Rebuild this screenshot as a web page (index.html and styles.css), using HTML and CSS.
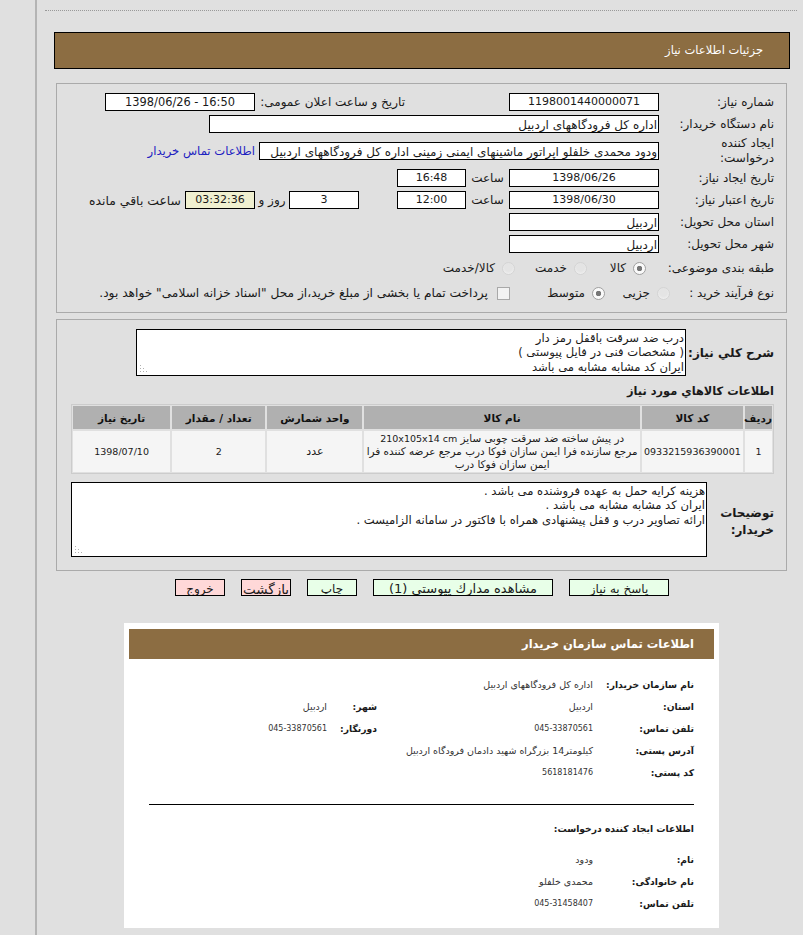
FILE: index.html
```html
<!DOCTYPE html>
<html lang="fa" dir="rtl">
<head>
<meta charset="utf-8">
<title>جزئیات اطلاعات نیاز</title>
<link rel="stylesheet" href="styles.css">
</head>
<body>
<div class="page">
  <div class="dots"></div>
  <div class="titlebar">جزئیات اطلاعات نیاز</div>

  <section class="panel form">
    <div class="row">
      <div class="lab">شماره نياز:</div>
      <div class="fld w150 c">1198001440000071</div>
      <div class="lab2">تاریخ و ساعت اعلان عمومی:</div>
      <div class="fld w150 c stamp">16:50 - 1398/06/26</div>
    </div>
    <div class="row">
      <div class="lab">نام دستگاه خریدار:</div>
      <div class="fld w450">اداره کل فرودگاههای اردبیل</div>
    </div>
    <div class="row tall">
      <div class="lab">ایجاد کننده<br>درخواست:</div>
      <div class="fld w400">ودود محمدی خلفلو اپراتور ماشینهای ایمنی زمینی اداره کل فرودگاههای اردبیل</div>
      <a class="link" href="#">اطلاعات تماس خریدار</a>
    </div>
    <div class="row">
      <div class="lab">تاریخ ایجاد نیاز:</div>
      <div class="fld w150 c">1398/06/26</div>
      <div class="hour">ساعت</div>
      <div class="fld w69 c">16:48</div>
    </div>
    <div class="row">
      <div class="lab">تاریخ اعتبار نیاز:</div>
      <div class="fld w150 c">1398/06/30</div>
      <div class="hour">ساعت</div>
      <div class="fld w69 c">12:00</div>
      <div class="fld w70 c days">3</div>
      <div class="and">روز و</div>
      <div class="fld w70 c clock">03:32:36</div>
      <div class="left">ساعت باقي مانده</div>
    </div>
    <div class="row">
      <div class="lab">استان محل تحویل:</div>
      <div class="fld w150">اردبیل</div>
    </div>
    <div class="row">
      <div class="lab">شهر محل تحویل:</div>
      <div class="fld w150">اردبیل</div>
    </div>
    <div class="row opts first">
      <div class="lab">طبقه بندی موضوعی:</div>
      <div class="opt o1"><span class="radio on"></span>كالا</div>
      <div class="opt o2"><span class="radio"></span>خدمت</div>
      <div class="opt o3"><span class="radio"></span>كالا/خدمت</div>
    </div>
    <div class="row opts second">
      <div class="lab">نوع فرآیند خرید :</div>
      <div class="opt o4"><span class="radio"></span>جزیی</div>
      <div class="opt o5"><span class="radio on"></span>متوسط</div>
      <div class="opt o6"><span class="check"></span>پرداخت تمام یا بخشی از مبلغ خرید،از محل "اسناد خزانه اسلامی" خواهد بود.</div>
    </div>
  </section>

  <section class="panel detail">
    <div class="desc">
      <div class="blab">شرح كلي نياز:</div>
      <div class="wrap">
        <textarea class="area a1" readonly>درب ضد سرقت باقفل رمز دار
( مشخصات فنی در فایل پیوستی )
ایران کد مشابه مشابه می باشد</textarea>
        <span class="grip"></span>
      </div>
    </div>
    <h2 class="blab goods">اطلاعات كالاهاي مورد نياز</h2>
    <table class="items">
      <thead>
        <tr>
          <th class="col1">رديف</th>
          <th class="col2">کد کالا</th>
          <th class="col3">نام کالا</th>
          <th class="col4">واحد شمارش</th>
          <th class="col5">تعداد / مقدار</th>
          <th class="col6">تاریخ نیاز</th>
        </tr>
      </thead>
      <tbody>
        <tr>
          <td>1</td>
          <td>0933215936390001</td>
          <td class="name">در پیش ساخته ضد سرقت چوبی سایز <span class="latin">210x105x14 cm</span><br>مرجع سازنده فرا ایمن سازان فوکا درب مرجع عرضه کننده فرا<br>ایمن سازان فوکا درب</td>
          <td class="unit">عدد</td>
          <td>2</td>
          <td>1398/07/10</td>
        </tr>
      </tbody>
    </table>
    <div class="notes">
      <div class="blab nlab">توضیحات خریدار:</div>
      <div class="wrap">
        <textarea class="area a2" readonly>هزینه کرایه حمل به عهده فروشنده می باشد .
ایران کد مشابه مشابه می باشد .
ارائه تصاویر درب و قفل پیشنهادی همراه با فاکتور در سامانه الزامیست .</textarea>
        <span class="grip"></span>
      </div>
    </div>
  </section>

  <div class="actions">
    <button class="btn go b100">پاسخ به نیاز</button>
    <button class="btn go b180 big">مشاهده مدارك پيوستي (1)</button>
    <button class="btn go b50">چاپ</button>
    <button class="btn stop b50 big2">بازگشت</button>
    <button class="btn stop b50">خروج</button>
  </div>

  <section class="card">
    <h2 class="cardtitle">اطلاعات تماس سازمان خریدار</h2>
    <div class="crow first-c"><b>نام سازمان خریدار:</b><span>اداره کل فرودگاههای اردبیل</span></div>
    <div class="crow"><b>استان:</b><span class="short">اردبیل</span><b class="b2">شهر:</b><span>اردبیل</span></div>
    <div class="crow"><b>تلفن تماس:</b><span class="short num">045-33870561</span><b class="b2">دورنگار:</b><span class="num">045-33870561</span></div>
    <div class="crow"><b>آدرس پستی:</b><span>کیلومتر14 بزرگراه شهید دادمان فرودگاه اردبیل</span></div>
    <div class="crow"><b>کد پستی:</b><span class="num">5618181476</span></div>
    <hr class="rule">
    <h3 class="sub">اطلاعات ایجاد کننده درخواست:</h3>
    <div class="crow"><b>نام:</b><span>ودود</span></div>
    <div class="crow"><b>نام خانوادگی:</b><span>محمدی خلفلو</span></div>
    <div class="crow"><b>تلفن تماس:</b><span class="num">045-31458407</span></div>
  </section>
</div>
</body>
</html>
```
FILE: styles.css
```css
* { box-sizing: border-box; }
html, body { margin: 0; height: 935px; overflow: hidden; }
body {
  background: #e0e0e0;
  color: #1a1a1a;
  font-family: "DejaVu Sans", sans-serif;
  font-size: 12px;
}
.page {
  width: 803px;
  height: 935px;
  padding: 10px 6px 0 0;
  position: relative;
}
.page::before {
  content: "";
  position: absolute;
  left: 35px;
  top: 0;
  bottom: 0;
  width: 2px;
  background: #b4b4b4;
}
.dots { height: 1px; margin-left: 45px; border-top: 1px dotted #999; }
.titlebar {
  height: 37px;
  margin: 21px 7px 0 0;
  width: 736px;
  background: #8c6d42;
  border: 1px solid #000;
  color: #fff;
  line-height: 35px;
  padding-right: 26px;
  font-size: 11.5px;
}
.panel {
  width: 731px;
  margin-right: 10px;
  border: 1px solid #aaa;
  padding-right: 12px;
}
.form { height: 230px; margin-top: 14px; padding-top: 9px; }
.row { display: flex; height: 18px; margin-bottom: 4px; align-items: center; }
.row.tall { height: 28px; margin-bottom: 4px; }
.lab { width: 115px; flex: none; line-height: 15px; }
.fld {
  height: 18px;
  flex: none;
  background: #fff;
  border: 1px solid #000;
  line-height: 18px;
  white-space: nowrap;
  overflow: hidden;
  padding-right: 1px;
}
.c { text-align: center; padding: 0; font-size: 11px; line-height: 16px; }
.stamp { font-size: 11.4px; }
.w150 { width: 150px; }
.w450 { width: 450px; }
.w400 { width: 400px; }
.w69 { width: 69px; }
.w70 { width: 70px; }
.lab2 { width: 150px; margin-right: 104px; flex: none; white-space: nowrap; }
.link { color: #2020c0; text-decoration: none; margin-right: 4px; white-space: nowrap; font-size: 11.6px; }
.hour { width: 43px; flex: none; text-align: center; }
.days { margin-right: 38px; }
.and { width: 34px; text-align: center; flex: none; white-space: nowrap; }
.clock { background: #f0f0d0; }
.left { margin-right: 4px; white-space: nowrap; font-size: 12.4px; }
.first { margin-top: 6px; margin-bottom: 7px; }
.opt { display: flex; align-items: center; white-space: nowrap; }
.o1 { margin-right: 13px; width: 59px; flex: none; }
.o2 { width: 72px; flex: none; }
.o4 { width: 65px; margin-right: -11px; flex: none; }
.o5 { width: 95px; flex: none; }
.o6 { font-size: 12.2px; }
.radio {
  width: 13px;
  height: 13px;
  border-radius: 50%;
  flex: none;
  margin-left: 7px;
  background: radial-gradient(circle at 50% 40%, #e4e4e4 0 45%, #f6f6f6 100%);
  border: 1px solid #d4d4d4;
}
.radio.on {
  background: radial-gradient(circle, #777 0 2.5px, #fafafa 3px);
  border-color: #a0a0a0;
}
.check {
  width: 13px;
  height: 13px;
  flex: none;
  margin-left: 9px;
  background: #f2f2f2;
  border: 1px solid #a8a8a8;
}
.detail { height: 252px; margin-top: 6px; padding-top: 9px; }
.desc { display: flex; align-items: center; height: 47px; }
.blab { font-size: 12px; font-weight: bold; margin: 0; }
.desc .blab { width: 88px; flex: none; }
.wrap { position: relative; flex: none; }
.grip {
  position: absolute;
  left: 4px;
  bottom: 4px;
  width: 1px;
  height: 1px;
  background: #b0b0b0;
  box-shadow: 0 -3px #b0b0b0, 0 -6px #b0b0b0, 3px 0 #b0b0b0, 3px -3px #b0b0b0, 6px 0 #b0b0b0;
}
.area {
  display: block;
  background: #fff;
  border: 1px solid #000;
  border-radius: 0;
  padding: 1px 1px 0;
  margin: 0;
  font: 11.6px/14.3px "DejaVu Sans", sans-serif;
  color: #1a1a1a;
  overflow: hidden;
  outline: none;
  resize: none;
}
.a1 { width: 550px; height: 47px; }
.a2 { width: 636px; height: 75px; }
.goods { margin-top: 7px; height: 18px; line-height: 16px; font-size: 11.4px; }
.items {
  width: 703px;
  margin-top: 3px;
  border-collapse: separate;
  border-spacing: 2px;
  table-layout: fixed;
  box-shadow: inset 0 0 0 1px #ccc;
}
.items th {
  height: 23px;
  background: #b0b0b0;
  font-size: 10.5px;
  padding: 0;
  color: #111;
}
.items td {
  height: 41px;
  background: #f5f5f5;
  text-align: center;
  padding: 0;
  font-size: 9.5px;
}
.items td.name { font-size: 10.4px; line-height: 13px; white-space: nowrap; overflow: hidden; }
.items td.unit { font-size: 11px; }
.latin { font-size: 9.5px; }
.col1 { width: 27px; }
.col2 { width: 101px; }
.col3 { width: 275px; }
.col4 { width: 95px; }
.col5 { width: 93px; }
.col6 { width: 97px; }
.notes { display: flex; align-items: center; height: 75px; margin-top: 8px; }
.nlab { width: 67px; flex: none; line-height: 17px; padding-top: 4px; }
.actions { display: flex; gap: 16px; margin: 8px 128px 0 0; height: 17px; }
.btn {
  height: 17px;
  padding: 3px 0 0;
  margin: 0;
  border: 1px solid #000;
  border-radius: 0;
  font: 12px/12px "DejaVu Sans", sans-serif;
  color: #1a1a1a;
  overflow: hidden;
  white-space: nowrap;
}
.big { font-size: 13px; }
.big2 { font-size: 13.5px; }
.go { background: #e8ffe8; }
.stop { background: #ffd8d8; }
.b100 { width: 100px; }
.b180 { width: 180px; }
.b50 { width: 50px; }
.card {
  width: 595px;
  height: 305px;
  margin: 27px 78px 0 0;
  background: #fff;
  padding: 6px 5px 0;
}
.cardtitle {
  height: 30px;
  margin: 0;
  background: #8c6d42;
  color: #fff;
  font-size: 11.5px;
  font-weight: bold;
  line-height: 30px;
  padding-right: 20px;
}
.crow { display: flex; height: 22px; align-items: center; padding-right: 20px; }
.first-c { margin-top: 14px; }
.crow b { width: 101px; flex: none; font-size: 9.2px; }
.crow span { font-size: 9.5px; color: #333; white-space: nowrap; }
.crow .num { font-size: 8px; }
.crow .short { width: 216px; flex: none; }
.crow b.b2 { width: 50px; }
.rule {
  height: 1px;
  width: 545px;
  margin: 21px 20px 0 0;
  border: 0;
  background: #000;
}
.sub { margin: 17px 20px 12px 0; font-size: 9.2px; font-weight: bold; height: 14px; line-height: 14px; }
```
